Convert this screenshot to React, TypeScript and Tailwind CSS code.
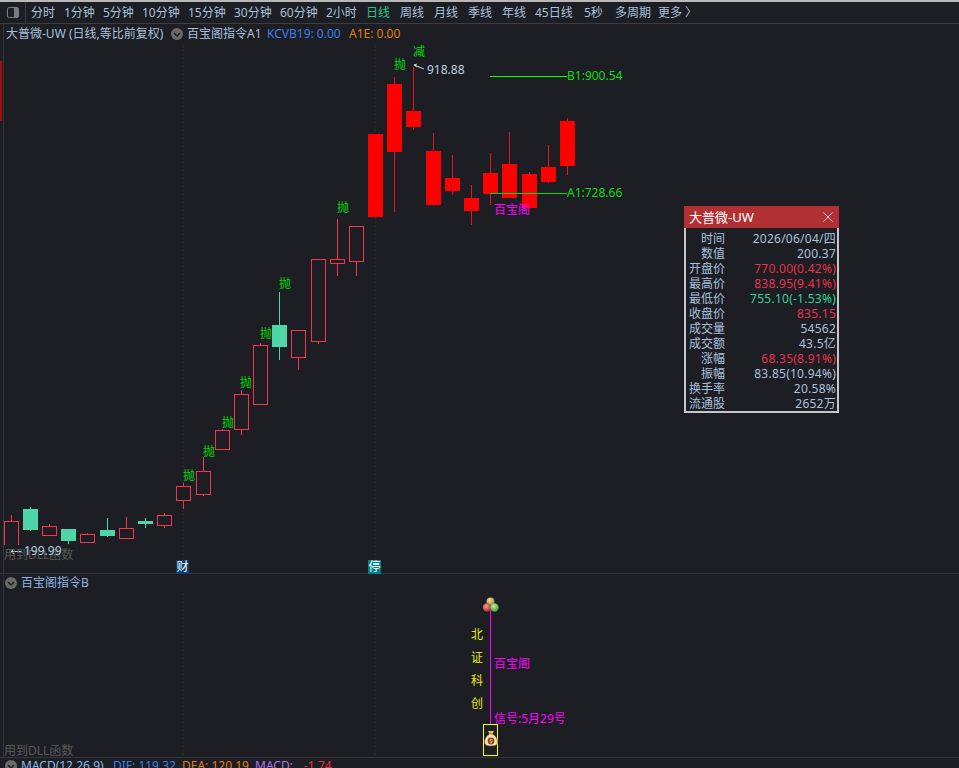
const RED = "#ff0000";
const HOLLOW = "#f5344f";
const GREEN = "#4ed6a8";

type Candle = { x: number; t: number; b: number; hi: number; lo: number; k: "r" | "h" | "g"; open?: boolean };

const candles: Candle[] = [
  { x: 4, t: 521, b: 545, hi: 515, lo: 521, k: "h", open: true },
  { x: 23, t: 509, b: 530, hi: 507, lo: 531, k: "g" },
  { x: 42, t: 526, b: 536, hi: 524, lo: 536, k: "h" },
  { x: 61, t: 529, b: 541, hi: 529, lo: 544, k: "g" },
  { x: 80, t: 534, b: 543, hi: 533, lo: 543, k: "h" },
  { x: 100, t: 530, b: 536, hi: 518, lo: 537, k: "g" },
  { x: 119, t: 528, b: 539, hi: 517, lo: 539, k: "h" },
  { x: 138, t: 521, b: 524, hi: 518, lo: 528, k: "g" },
  { x: 157, t: 515, b: 526, hi: 513, lo: 528, k: "h" },
  { x: 176, t: 486, b: 501, hi: 483, lo: 509, k: "h" },
  { x: 196, t: 471, b: 495, hi: 457, lo: 496, k: "h" },
  { x: 215, t: 430, b: 450, hi: 429, lo: 450, k: "h" },
  { x: 234, t: 394, b: 430, hi: 390, lo: 435, k: "h" },
  { x: 253, t: 345, b: 405, hi: 343, lo: 405, k: "h" },
  { x: 272, t: 325, b: 347, hi: 292, lo: 360, k: "g" },
  { x: 291, t: 330, b: 358, hi: 330, lo: 370, k: "h" },
  { x: 311, t: 259, b: 342, hi: 259, lo: 344, k: "h" },
  { x: 330, t: 259, b: 264, hi: 219, lo: 276, k: "h" },
  { x: 349, t: 226, b: 262, hi: 226, lo: 276, k: "h" },
  { x: 368, t: 134, b: 217, hi: 134, lo: 217, k: "r" },
  { x: 387, t: 84, b: 152, hi: 77, lo: 212, k: "r" },
  { x: 406, t: 111, b: 127, hi: 67, lo: 130, k: "r" },
  { x: 426, t: 151, b: 205, hi: 133, lo: 206, k: "r" },
  { x: 445, t: 178, b: 191, hi: 155, lo: 195, k: "r" },
  { x: 464, t: 198, b: 211, hi: 185, lo: 225, k: "r" },
  { x: 483, t: 173, b: 194, hi: 153, lo: 205, k: "r" },
  { x: 502, t: 164, b: 198, hi: 132, lo: 198, k: "r" },
  { x: 522, t: 174, b: 208, hi: 172, lo: 208, k: "r" },
  { x: 541, t: 167, b: 182, hi: 145, lo: 183, k: "r" },
  { x: 560, t: 121, b: 166, hi: 118, lo: 175, k: "r" },
];

const periods: [string, string][] = [
  ["分时", "w-[24px] ml-[5px]"],
  ["1分钟", "w-[31px] ml-[9px]"],
  ["5分钟", "w-[31px] ml-[8px]"],
  ["10分钟", "w-[38px] ml-[8px]"],
  ["15分钟", "w-[38px] ml-[8px]"],
  ["30分钟", "w-[38px] ml-[8px]"],
  ["60分钟", "w-[38px] ml-[8px]"],
  ["2小时", "w-[31px] ml-[8px]"],
];
const periods2: [string, string][] = [
  ["周线", "w-[24px] ml-[10px]"],
  ["月线", "w-[24px] ml-[10px]"],
  ["季线", "w-[24px] ml-[10px]"],
  ["年线", "w-[24px] ml-[10px]"],
  ["45日线", "w-[38px] ml-[9px]"],
  ["5秒", "w-[20px] ml-[11px]"],
  ["多周期", "w-[36px] ml-[11px]"],
  ["更多", "w-[24px] ml-[7px]"],
  ["〉", "w-[12px] ml-[3px]"],
];

const sells: [string, number, number][] = [
  ["减", 419, 20],
  ["抛", 400, 33],
  ["抛", 343, 176],
  ["抛", 285, 252],
  ["抛", 266, 302],
  ["抛", 246, 351],
  ["抛", 228, 391],
  ["抛", 209, 420],
  ["抛", 189, 444],
];

const rows: [string, string, string][] = [
  ["时间", "2026/06/04/四", "text-[#a9c0de]"],
  ["数值", "200.37", "text-[#a9c0de]"],
  ["开盘价", "770.00(0.42%)", "text-[#e8304a]"],
  ["最高价", "838.95(9.41%)", "text-[#e8304a]"],
  ["最低价", "755.10(-1.53%)", "text-[#35d09a]"],
  ["收盘价", "835.15", "text-[#e8304a]"],
  ["成交量", "54562", "text-[#a9c0de]"],
  ["成交额", "43.5亿", "text-[#a9c0de]"],
  ["涨幅", "68.35(8.91%)", "text-[#e8304a]"],
  ["振幅", "83.85(10.94%)", "text-[#a9c0de]"],
  ["换手率", "20.58%", "text-[#a9c0de]"],
  ["流通股", "2652万", "text-[#a9c0de]"],
];

function Chevron() {
  return (
    <svg width="12" height="12" viewBox="0 0 12 12" className="shrink-0">
      <circle cx="6" cy="6" r="6" fill="#6a6a6a" />
      <path d="M3 5 L6 8 L9 5" fill="none" stroke="#1c1e23" strokeWidth="1.5" />
    </svg>
  );
}

function Grid({ y0, y1 }: { y0: number; y1: number }) {
  return (
    <>
      {[183, 375].map((x) => (
        <line key={x} x1={x + 0.5} x2={x + 0.5} y1={y0} y2={y1} stroke="#303238" strokeDasharray="1 3" />
      ))}
    </>
  );
}

function Candles() {
  return (
    <>
      {candles.map((c) => {
        const color = c.k === "r" ? RED : c.k === "h" ? HOLLOW : GREEN;
        const cx = c.x + 7.5;
        return (
          <g key={c.x} shapeRendering="crispEdges">
            <line x1={cx} x2={cx} y1={c.hi} y2={c.lo} stroke={c.k === "r" ? "#e8101c" : color} />
            {c.open ? (
              <path
                d={`M${c.x + 0.5} ${c.b} V${c.t + 0.5} H${c.x + 14.5} V${c.b}`}
                fill="#1c1e23"
                stroke={color}
              />
            ) : c.k === "h" ? (
              <rect x={c.x + 0.5} y={c.t + 0.5} width={14} height={c.b - c.t - 1} fill="#1c1e23" stroke={color} />
            ) : (
              <rect x={c.x} y={c.t} width={15} height={c.b - c.t} fill={color} />
            )}
          </g>
        );
      })}
    </>
  );
}

function Balls() {
  return (
    <svg width="18" height="16" viewBox="0 0 18 16" className="absolute left-[481px] top-[23px]">
      <defs>
        <radialGradient id="by" cx="40%" cy="35%" r="70%">
          <stop offset="0%" stopColor="#f0e0a0" />
          <stop offset="100%" stopColor="#a08030" />
        </radialGradient>
        <radialGradient id="br" cx="40%" cy="35%" r="70%">
          <stop offset="0%" stopColor="#f8a090" />
          <stop offset="100%" stopColor="#b02020" />
        </radialGradient>
        <radialGradient id="bg" cx="40%" cy="35%" r="70%">
          <stop offset="0%" stopColor="#c8f0a0" />
          <stop offset="100%" stopColor="#30a020" />
        </radialGradient>
      </defs>
      <circle cx="9.5" cy="4.5" r="4" fill="url(#by)" />
      <circle cx="6" cy="10.5" r="4.2" fill="url(#br)" />
      <circle cx="13.5" cy="10.5" r="4.2" fill="url(#bg)" />
    </svg>
  );
}

function Bag() {
  return (
    <svg width="14" height="17" viewBox="0 0 14 17" className="absolute left-[484px] top-[156px]">
      <path d="M4 1 L10 1 L8.5 4 L5.5 4 Z" fill="#f0c040" />
      <path d="M5.5 4 L8.5 4 C12 6 13.5 9 13.5 12 C13.5 15 11 16 7 16 C3 16 0.5 15 0.5 12 C0.5 9 2 6 5.5 4 Z" fill="#f5e2b0" stroke="#7a4a20" strokeWidth="0.6" />
      <circle cx="7" cy="11" r="3.4" fill="#8a4028" />
      <path d="M8.4 9.7 C7.6 9 5.8 9.2 5.9 10.3 C6 11.3 8.2 10.8 8.2 11.9 C8.2 12.9 6.3 13 5.6 12.3" fill="none" stroke="#f5e2b0" strokeWidth="0.8" />
    </svg>
  );
}

export default function App() {
  return (
    <div className="w-[959px] h-[768px] overflow-hidden bg-[#1c1e23] flex flex-col font-['Noto_Sans','Noto_Sans_CJK_SC',sans-serif] text-[12px] leading-[16px] text-[#a9c0de]">
      <div className="h-[2px] shrink-0 bg-[#b8b8b8]" />

      {/* period bar */}
      <div className="h-[22px] shrink-0 flex items-center border-b border-[#3a3c42] whitespace-nowrap">
        <div className="w-[26px] h-full shrink-0 border-r border-[#3a3c42] flex items-center justify-center">
          <div className="w-[12px] h-[11px] rounded-[2px] border border-[#777b82] flex justify-end">
            <div className="w-[4px] h-full bg-[#777b82]" />
          </div>
        </div>
        {periods.map(([t, c]) => (
          <span key={t} className={c}>{t}</span>
        ))}
        <span className="w-[24px] ml-[9px] text-[#35c08a]">日线</span>
        {periods2.map(([t, c]) => (
          <span key={t} className={c}>{t}</span>
        ))}
      </div>

      {/* main chart */}
      <div className="relative h-[550px] shrink-0 border-b border-[#33353b]">
        <svg className="absolute left-0 top-0" width="959" height="550" viewBox="0 24 959 550">
          <rect x="0" y="61" width="2" height="60" fill="#a01010" />
          <line x1="3.5" x2="3.5" y1="24" y2="574" stroke="#33353b" />
          <Grid y0={46} y1={574} />
          <Candles />
          <line x1="490" x2="567" y1="76.5" y2="76.5" stroke="#00ff00" shapeRendering="crispEdges" />
          <line x1="490" x2="567" y1="193.5" y2="193.5" stroke="#00e000" shapeRendering="crispEdges" />
          <line x1="414" x2="424" y1="65" y2="69" stroke="#c8d4e4" />
          <path d="M417 64 L414 65 L417 67" fill="none" stroke="#c8d4e4" />
          <line x1="11" x2="22" y1="551.5" y2="551.5" stroke="#c8d4e4" />
          <path d="M14 549 L11 551.5 L14 554" fill="none" stroke="#c8d4e4" />
        </svg>

        <div className="relative flex items-center h-[20px] pl-[6px] whitespace-nowrap">
          <span className="w-[160px]">大普微-UW (日线,等比前复权)</span>
          <span className="ml-[5px]"><Chevron /></span>
          <span className="ml-[4px] w-[74px]">百宝阁指令A1</span>
          <span className="ml-[6px] w-[77px] text-[#3f7fe8]">KCVB19: 0.00</span>
          <span className="ml-[5px] text-[#e07c10]">A1E: 0.00</span>
        </div>

        {sells.map(([t, x, y], i) => (
          <span key={i} className="absolute -translate-x-1/2 text-[#00dd00]" style={{ left: x, top: y }}>
            {t}
          </span>
        ))}
        <span className="absolute left-[427px] top-[38px] text-[#c0d0e4]">918.88</span>
        <span className="absolute left-[567px] top-[44px] text-[#10dc10]">B1:900.54</span>
        <span className="absolute left-[567px] top-[161px] text-[#10dc10]">A1:728.66</span>
        <span className="absolute left-[494px] top-[178px] text-[#ff00ff]">百宝阁</span>
        <span className="absolute left-[4px] top-[523px] text-[#5a5a5a]">用到DLL函数</span>
        <span className="absolute left-[24px] top-[519px] text-[#b8cbe2]">199.99</span>
        <span className="absolute left-[176px] top-[536px] w-[13px] h-[14px] leading-[14px] text-center bg-[#0a3f6f] text-white">财</span>
        <span className="absolute left-[368px] top-[536px] w-[13px] h-[14px] leading-[14px] text-center bg-[#00808a] text-white">停</span>

        {/* floating data window */}
        <div className="absolute left-[684px] top-[182px] w-[155px] h-[207px] bg-[#1c1e23] border-[2px] border-t-0 border-[#c4c6ca] flex flex-col">
          <div className="h-[22px] -mx-[2px] shrink-0 bg-[#b03034] flex items-center justify-between pl-[5px] pr-[6px] text-[13px] text-white">
            <span>大普微-UW</span>
            <svg width="10" height="10" viewBox="0 0 10 10">
              <path d="M0.5 0.5 L9.5 9.5 M9.5 0.5 L0.5 9.5" stroke="#e6c8c8" strokeWidth="1" />
            </svg>
          </div>
          <div className="pt-[3px] pl-[3px] pr-[1px] flex flex-col">
            {rows.map(([l, v, c]) => (
              <div key={l} className="h-[15px] flex items-center justify-between leading-[15px]">
                <span className="w-[36px] text-right">{l}</span>
                <span className={`${c} tracking-[0.25px]`}>{v}</span>
              </div>
            ))}
          </div>
        </div>
      </div>

      {/* indicator panel */}
      <div className="relative h-[184px] shrink-0 border-b border-[#33353b]">
        <svg className="absolute left-0 top-0" width="959" height="184" viewBox="0 575 959 184">
          <line x1="3.5" x2="3.5" y1="575" y2="759" stroke="#33353b" />
          <Grid y0={595} y1={759} />
          <line x1="490.5" x2="490.5" y1="610" y2="725" stroke="#ff00ff" shapeRendering="crispEdges" />
          <rect x="483.5" y="725.5" width="14" height="31" fill="none" stroke="#ffff00" shapeRendering="crispEdges" />
        </svg>
        <div className="relative flex items-center h-[17px] pl-[5px] whitespace-nowrap">
          <Chevron />
          <span className="ml-[4px] text-[#8ab6e8]">百宝阁指令B</span>
        </div>
        <Balls />
        <Bag />
        <span className="absolute left-[471px] top-[53px] text-[#e8e820]">北</span>
        <span className="absolute left-[471px] top-[76px] text-[#e8e820]">证</span>
        <span className="absolute left-[471px] top-[99px] text-[#e8e820]">科</span>
        <span className="absolute left-[471px] top-[122px] text-[#e8e820]">创</span>
        <span className="absolute left-[494px] top-[82px] text-[#ff00ff]">百宝阁</span>
        <span className="absolute left-[494px] top-[137px] text-[#ff00ff] whitespace-nowrap">信号:5月29号</span>
        <span className="absolute left-[4px] top-[169px] text-[#5a5a5a] whitespace-nowrap">用到DLL函数</span>
      </div>

      {/* MACD row, cut by the window edge */}
      <div className="flex items-center h-[16px] shrink-0 pl-[5px] whitespace-nowrap">
        <Chevron />
        <span className="ml-[4px] w-[86px] text-[#8ab6e8]">MACD(12,26,9)</span>
        <span className="ml-[6px] w-[63px] text-[#3f7fe8]">DIF: 119.32</span>
        <span className="ml-[6px] w-[67px] text-[#e07c10]">DEA: 120.19</span>
        <span className="ml-[6px] w-[40px] text-[#b070e8]">MACD:</span>
        <span className="ml-[9px] text-[#e8304a]">-1.74</span>
      </div>
    </div>
  );
}
